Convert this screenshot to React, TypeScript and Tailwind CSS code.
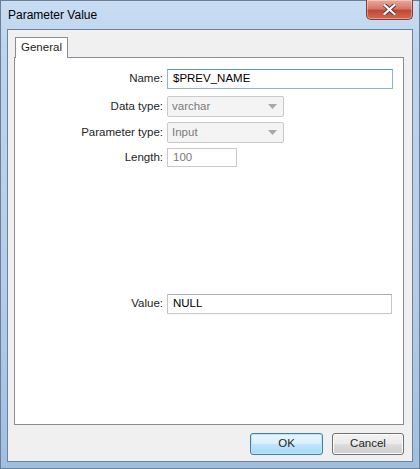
import React from 'react';

const font = { fontFamily: '"Liberation Sans", Arial, sans-serif' };

function Combo({ value }: { value: string }) {
  return (
    <div className="flex h-[21px] w-[117px] items-center justify-between rounded-[2px] border border-[#c9c9c9] bg-[#f4f4f4] pl-[4px] pr-[6px] text-[#7a7a7a]">
      <span>{value}</span>
      <svg width="9" height="5" viewBox="0 0 9 5">
        <path d="M0 0 H9 L4.5 5 Z" fill="#a8a8a8" />
      </svg>
    </div>
  );
}

function Row({ label, children, className = '' }: { label: string; children: React.ReactNode; className?: string }) {
  return (
    <div className={`flex items-center ${className}`}>
      <span className="w-[152px] pr-[4px] text-right text-[#1e1e1e]">{label}</span>
      {children}
    </div>
  );
}

function Button({ label, primary }: { label: string; primary?: boolean }) {
  return (
    <button
      className={`flex h-[22px] items-center justify-center rounded-[3px] border text-[#1e1e1e] ${
        primary
          ? 'w-[73px] border-[#3c7fb1] bg-[linear-gradient(#eaf6fd_0%,#d9f0fc_49%,#bee6fd_50%,#a7d9f5_100%)] shadow-[inset_0_0_0_1px_#bde3f9]'
          : 'w-[72px] border-[#707070] bg-[linear-gradient(#f2f2f2_0%,#ebebeb_49%,#dddddd_50%,#cfcfcf_100%)] shadow-[inset_0_0_0_1px_#fcfcfc]'
      }`}
    >
      {label}
    </button>
  );
}

export default function App() {
  return (
    <div
      className="relative flex h-[469px] w-[420px] flex-col border border-[#6b7f97] bg-[linear-gradient(180deg,#c9ddf2_0%,#bcd4ee_10%,#b4cdea_60%,#9fbfe2_100%)] text-[11.5px]"
      style={font}
    >
      {/* title bar */}
      <div className="flex h-[28px] shrink-0 items-center pl-[7px] text-[12px] text-black">Parameter Value</div>
      <div className="absolute right-[6px] top-[-1px] flex h-[20px] w-[47px] items-center justify-center rounded-b-[5px] border border-t-0 border-[#8b3a2f] bg-[linear-gradient(180deg,#e9a99b_0%,#d47868_45%,#c04a37_55%,#d26a4f_100%)] shadow-[inset_0_0_0_1px_rgba(255,255,255,0.35)]">
        <svg width="13" height="11" viewBox="0 0 13 11">
          <path
            d="M1.5 1 L11.5 10 M11.5 1 L1.5 10"
            stroke="#5a2a22"
            strokeWidth="4"
            strokeLinecap="square"
          />
          <path d="M1.5 1 L11.5 10 M11.5 1 L1.5 10" stroke="#ffffff" strokeWidth="2.2" strokeLinecap="square" />
        </svg>
      </div>

      {/* client area */}
      <div className="mx-[6px] mb-[6px] flex flex-1 flex-col border border-[#6f8197] bg-[#f0f0f0]">
        <div className="ml-[6px] mr-[8px] mt-[7px] flex flex-col">
          <div className="relative z-10 -mb-px ml-px flex h-[21px] w-[53px] items-center justify-center border border-b-0 border-[#898c95] bg-white text-[#1e1e1e]">
            General
          </div>
          <div className="flex h-[368px] flex-col border border-[#898c95] bg-white pt-[11px]">
            <Row label="Name:">
              <div className="flex h-[20px] w-[226px] items-center border border-[#8db2d6] border-t-[#5e92c2] bg-white pl-[5px] text-black">
                $PREV_NAME
              </div>
            </Row>
            <Row label="Data type:" className="mt-[7px]">
              <Combo value="varchar" />
            </Row>
            <Row label="Parameter type:" className="mt-[5px]">
              <Combo value="Input" />
            </Row>
            <Row label="Length:" className="mt-[5px]">
              <div className="flex h-[19px] w-[70px] items-center border border-[#c9c9c9] bg-white pl-[5px] text-[#7a7a7a]">
                100
              </div>
            </Row>
            <Row label="Value:" className="mt-[127px]">
              <div className="flex h-[20px] w-[225px] items-center border border-[#c5c5c5] border-t-[#abadb3] bg-white pl-[5px] text-black">
                NULL
              </div>
            </Row>
          </div>
          <div className="mt-[8px] flex justify-end gap-[9px]">
            <Button label="OK" primary />
            <Button label="Cancel" />
          </div>
        </div>
      </div>
    </div>
  );
}
